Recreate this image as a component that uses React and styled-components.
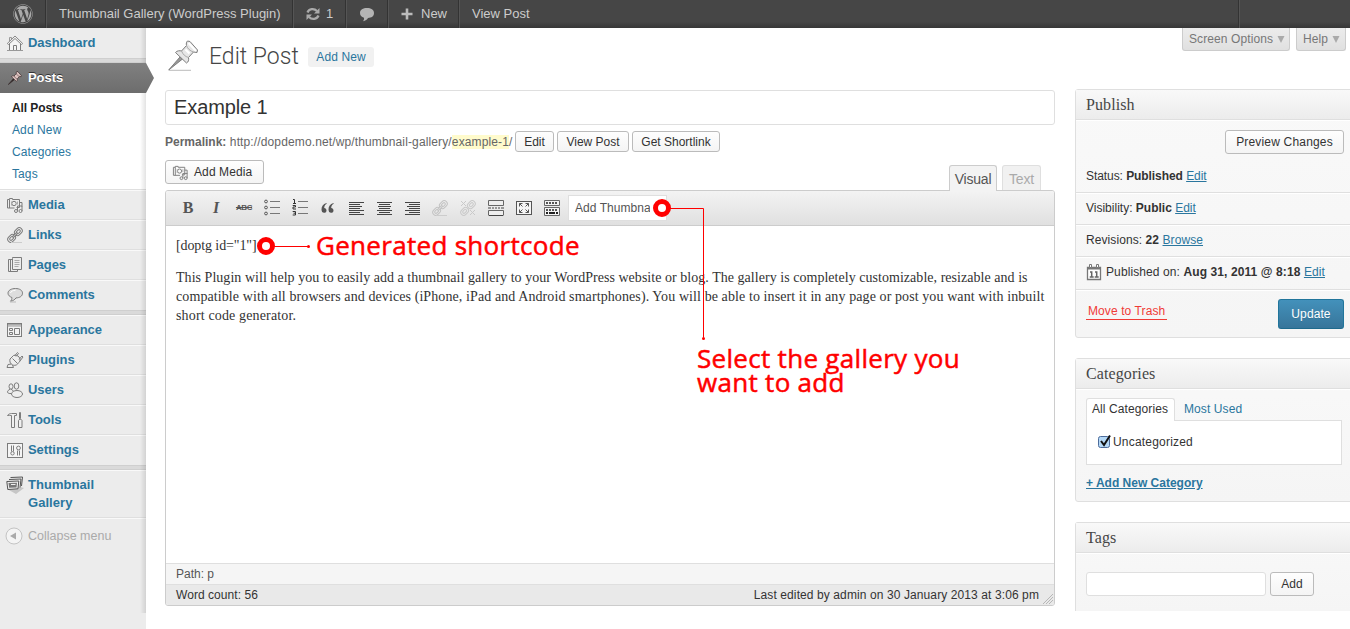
import React from "react";
import styled, { createGlobalStyle, css } from "styled-components";
import { FaWordpress } from "react-icons/fa";

const Global = createGlobalStyle`
  * { box-sizing: border-box; }
  body { margin: 0; background: #fff; overflow: hidden; }
`;

const sans = `"Liberation Sans", Arial, sans-serif`;
const serif = `"Liberation Serif", Georgia, serif`;
const link = "#2a769e";

const Page = styled.div`
  position: relative;
  width: 1350px;
  height: 629px;
  overflow: hidden;
  font: 12px/18px ${sans};
  letter-spacing: 0.1px;
  color: #333;
  display: flex;
  flex-direction: column;
`;

const T = styled.span`
  white-space: pre;
  ${(p) => p.$ls !== undefined && css`letter-spacing: ${p.$ls}px;`}
`;

/* ---------- admin bar ---------- */
const AdminBar = styled.header`
  flex: none;
  height: 28px;
  display: flex;
  background: linear-gradient(#464646 0 22px, #373737);
  color: #ccc;
  font-size: 13px;
  letter-spacing: 0;
  line-height: 28px;
`;
const BarItem = styled.div`
  width: ${(p) => p.$w}px;
  padding-left: ${(p) => p.$pl}px;
  display: flex;
  align-items: center;
  border-right: ${(p) => (p.$last ? "none" : "1px solid #333")};
  box-shadow: ${(p) => (p.$last ? "none" : "1px 0 0 #555")};
  gap: ${(p) => p.$gap || 0}px;
  color: #ccc;
  svg { flex: none; }
`;

/* ---------- sidebar ---------- */
const Body = styled.div`
  flex: 1;
  display: flex;
  min-height: 0;
`;
const Sidebar = styled.nav`
  position: relative;
  width: 146px;
  flex: none;
  background: #ececec;
  &::after {
    content: "";
    position: absolute;
    top: 0;
    right: 0;
    width: 6px;
    height: 585px;
    background: linear-gradient(90deg, rgba(0,0,0,0), rgba(0,0,0,0.11));
    pointer-events: none;
  }
`;
const MenuItem = styled.div`
  display: flex;
  align-items: flex-start;
  height: ${(p) => p.$h || 30}px;
  padding: 5px 0 0 6px;
  gap: 4px;
  border-top: ${(p) => (p.$first ? "1px solid #ececec" : "1px solid #f9f9f9")};
  border-bottom: ${(p) => (p.$end ? "1px solid #ececec" : "1px solid #dfdfdf")};
  color: ${link};
  font-weight: bold;
  font-size: 13px;
  letter-spacing: -0.05px;
  svg { flex: none; width: 18px; height: 18px; }
`;
const CurrentItem = styled(MenuItem)`
  position: relative;
  z-index: 2;
  border: 0;
  padding-top: 6px;
  background: linear-gradient(#808080, #6d6d6d);
  color: #fff;
  text-shadow: 0 -1px 0 #333;
  svg { width: 14px; height: 14px; margin: 2px 2px 0; }
  &::after {
    content: "";
    position: absolute;
    left: 146px;
    top: 0;
    width: 8px;
    height: 30px;
    background: linear-gradient(#808080, #6d6d6d);
    clip-path: polygon(0 0, 100% 50%, 0 100%);
  }
`;
const Separator = styled.div`
  height: 5px;
  background: #dadada;
  border-top: 1px solid #cfcfcf;
  border-bottom: 1px solid #cfcfcf;
`;
const SubMenu = styled.div`
  height: 97px;
  padding: 4px 0 0 12px;
  background: #fff;
  border-bottom: 1px solid #dfdfdf;
  line-height: 22px;
  color: ${link};
  display: flex;
  flex-direction: column;
`;
const SubCurrent = styled.div`
  font-weight: bold;
  letter-spacing: -0.1px;
  color: #222;
`;
const Collapse = styled.div`
  display: flex;
  align-items: center;
  gap: 5px;
  height: 35px;
  padding-left: 5px;
  border-top: 1px solid #f9f9f9;
  color: #aaa;
  font-size: 12.5px;
  letter-spacing: 0;
`;

/* ---------- content ---------- */
const Content = styled.main`
  flex: 1;
  display: grid;
  grid-template-columns: 890px 275px;
  column-gap: 20px;
  padding-left: 19px;
`;
const MainCol = styled.section`
  display: flex;
  flex-direction: column;
`;
const Heading = styled.div`
  display: flex;
  align-items: center;
  height: 62px;
  padding: 0 0 5px 3px;
  svg { flex: none; margin-bottom: 2px; }
`;
const H2 = styled.h2`
  margin: 0 0 0 10px;
  width: 99px;
  font: 300 23px/30px Roboto, ${sans};
  letter-spacing: 0;
  color: #464646;
  white-space: nowrap;
`;
const AddNew = styled.a`
  height: 20px;
  width: 66px;
  text-align: center;
  line-height: 20px;
  border-radius: 3px;
  background: #f1f1f1;
  color: ${link};
  margin-top: 1px;
`;
const TitleBox = styled.div`
  height: 35px;
  border: 1px solid #dfdfdf;
  border-radius: 3px;
  padding-left: 8px;
  font-size: 20px;
  letter-spacing: -0.1px;
  line-height: 33px;
`;
const Button = styled.button`
  height: ${(p) => p.$h || 24}px;
  width: ${(p) => p.$w}px;
  flex: none;
  padding: 0;
  display: flex;
  align-items: center;
  justify-content: center;
  gap: 5px;
  border: 1px solid #bbb;
  border-radius: 3px;
  background: linear-gradient(#fefefe, #f4f4f4);
  font: 12px/18px ${sans};
  letter-spacing: ${(p) => p.$ls || 0}px;
  color: #333;
  ${(p) =>
    p.$primary &&
    css`
      border-color: #21759b #21759b #1e6a8d;
      background: linear-gradient(#4391bb, #37759a);
      color: #fff;
      text-shadow: 0 1px 0 rgba(0, 0, 0, 0.1);
    `}
`;
const MediaButton = styled(Button)`
  justify-content: flex-start;
  padding-left: 6px;
  gap: 5px;
`;
const Permalink = styled.div`
  display: flex;
  align-items: center;
  height: 22px;
  margin-top: 5px;
  gap: 3px;
  color: #666;
`;
const SmallButton = styled(Button)`
  height: 21px;
  padding-top: 1px;
`;
const PermaText = styled.div`
  width: 347px;
  padding-top: 1px;
  letter-spacing: 0.13px;
  white-space: nowrap;
  b { letter-spacing: 0; }
  mark { background: #fffbcc; color: #666; }
`;
const EditorTools = styled.div`
  display: flex;
  justify-content: space-between;
  align-items: flex-start;
  height: 38px;
  padding-top: 8px;
`;
const Tabs = styled.div`
  display: flex;
  gap: 5px;
  margin: 5px 14px 0 0;
`;
const Tab = styled.div`
  height: ${(p) => (p.$active ? 26 : 25)}px;
  width: ${(p) => p.$w}px;
  border: 1px solid ${(p) => (p.$active ? "#ccc" : "#dfdfdf")};
  border-bottom: 0;
  border-radius: 3px 3px 0 0;
  background: ${(p) => (p.$active ? "#f3f3f3" : "#f1f1f1")};
  color: ${(p) => (p.$active ? "#555" : "#aaa")};
  font-size: 14px;
  letter-spacing: -0.2px;
  line-height: 26px;
  text-align: center;
  position: relative;
  z-index: 1;
`;
const Editor = styled.div`
  height: 416px;
  border: 1px solid #ccc;
  border-radius: 3px;
  display: flex;
  flex-direction: column;
  overflow: hidden;
`;
const Toolbar = styled.div`
  display: flex;
  align-items: center;
  height: 35px;
  padding-left: 12px;
  gap: 8px;
  border-bottom: 1px solid #ccc;
  background: linear-gradient(#f3f3f3, #e0e0e0);
  svg { flex: none; }
`;
const Glyph = styled.span`
  width: 20px;
  text-align: center;
  color: #555;
  font: ${(p) => p.$font};
  letter-spacing: ${(p) => p.$ls || 0}px;
`;
const Select = styled.div`
  width: 99px;
  height: 26px;
  margin-left: -2px;
  border: 1px solid #dfdfdf;
  background: #fff;
  color: #555;
  padding: 0 17px 0 6px;
  font-size: 12px;
  line-height: 24px;
  div { overflow: hidden; white-space: nowrap; width: 75px; }
`;
const Text = styled.div`
  flex: 1;
  padding: 10px;
  font: 14px/19px ${serif};
  color: #333;
  p { margin: 0 0 13px; white-space: nowrap; }
`;
const StatusRow = styled.div`
  display: flex;
  justify-content: space-between;
  height: 21px;
  padding: 0 15px 0 10px;
  line-height: 20px;
  border-top: 1px solid #dfdfdf;
  background: ${(p) => (p.$dark ? "#e9e9e9" : "#f5f5f5")};
  color: ${(p) => (p.$dark ? "#333" : "#555")};
  position: relative;
  svg { position: absolute; right: 0; bottom: 0; }
`;

/* ---------- right column ---------- */
const SideCol = styled.aside`
  display: flex;
  flex-direction: column;
`;
const ScreenLinks = styled.div`
  display: flex;
  justify-content: flex-end;
  gap: 6px;
  height: 61px;
  padding-right: 4px;
`;
const ScreenLink = styled.div`
  height: 23px;
  width: ${(p) => p.$w}px;
  flex: none;
  display: flex;
  align-items: center;
  gap: 4px;
  padding: 0 0 1px 6px;
  border: 1px solid #ccc;
  border-top: 0;
  border-radius: 0 0 3px 3px;
  background: linear-gradient(#ececec, #e0e0e0);
  color: #777;
  svg { margin-top: 1px; }
`;
const Panel = styled.section`
  width: 290px;
  height: ${(p) => p.$h}px;
  flex: none;
  margin-bottom: 20px;
  border: 1px solid #dfdfdf;
  border-bottom-width: ${(p) => (p.$cut ? 0 : 1)}px;
  border-radius: ${(p) => (p.$cut ? "3px 3px 0 0" : "3px")};
  background: linear-gradient(#f9f9f9, #f5f5f5);
`;
const PanelTitle = styled.h3`
  margin: 0;
  height: 30px;
  padding-left: 10px;
  border-bottom: 1px solid #dfdfdf;
  background: linear-gradient(#f9f9f9, #ececec);
  box-shadow: 0 1px 0 #fff;
  font: 16px/29px ${serif};
  color: #464646;
`;
const Row = styled.div`
  display: flex;
  align-items: center;
  height: ${(p) => p.$h || 32}px;
  padding: 0 0 2px 10px;
  border-bottom: 1px solid #dfdfdf;
  box-shadow: 0 1px 0 #fff;
  letter-spacing: 0;
  a { color: ${link}; text-decoration: underline; }
  svg { margin: 0 4px 0 0; }
`;
const PreviewRow = styled.div`
  height: 41px;
  padding: 10px 0 0 149px;
`;
const Actions = styled.div`
  display: flex;
  justify-content: space-between;
  height: 47px;
  padding: 9px 20px 0 10px;
`;
const Trash = styled.a`
  height: 21px;
  width: 81px;
  padding: 3px 0 0 2px;
  white-space: nowrap;
  color: #f03a36;
  border-bottom: 1px solid #f03a36;
`;
const CatTabs = styled.div`
  display: flex;
  padding: 9px 0 0 10px;
  color: ${link};
  line-height: 22px;
`;
const CatTab = styled.div`
  width: 89px;
  height: 23px;
  margin: 0 9px -1px 0;
  border: 1px solid #dfdfdf;
  border-bottom: 0;
  border-radius: 3px 3px 0 0;
  background: #fff;
  color: #333;
  padding-left: 5px;
  line-height: 21px;
  white-space: nowrap;
  position: relative;
`;
const CatBox = styled.div`
  width: 256px;
  height: 45px;
  margin-left: 10px;
  border: 1px solid #dfdfdf;
  background: #fff;
  display: flex;
  align-items: center;
  padding: 0 0 1px 10px;
  gap: 1px;
  svg { margin-bottom: 2px; }
`;
const AddCategory = styled.a`
  display: block;
  margin: 9px 0 0 10px;
  font-weight: bold;
  letter-spacing: 0;
  color: ${link};
  text-decoration: underline;
`;
const TagRow = styled.div`
  display: flex;
  gap: 4px;
  padding: 19px 0 0 10px;
`;
const TagInput = styled.div`
  width: 180px;
  height: 24px;
  border: 1px solid #dfdfdf;
  border-radius: 3px;
  background: #fff;
`;

/* ---------- annotations ---------- */
const Callout = styled.div`
  position: absolute;
  left: ${(p) => p.$x}px;
  top: ${(p) => p.$y}px;
  z-index: 5;
  font: 400 26px/24px "Open Sans", sans-serif;
  letter-spacing: 0.3px;
  -webkit-text-stroke: 0.5px #f00;
  color: #f00;
  white-space: pre;
`;
const Pointer = styled.svg`
  position: absolute;
  left: ${(p) => p.$x}px;
  top: ${(p) => p.$y}px;
  z-index: 5;
`;

/* ---------- icons ---------- */
const Svg = ({ s = 18, children, ...r }) => (
  <svg width={s} height={s} viewBox="0 0 18 18" fill="none" stroke="#7c7c7c" strokeWidth="1" {...r}>
    {children}
  </svg>
);
const HomeIcon = () => (
  <Svg>
    <path d="M3.500 10v6.500h11V10L9 5z" fill="#f4f4f4" stroke="none" />
    <path d="M3.500 10v6.500h11V10M7.500 16.500v-5h3v5" />
    <path d="M3.500 7V3.500h2V5M1 16.500h16" stroke="#999" />
    <path d="M1.300 9.500 9 2l7.700 7.500-1.200 1L9 4.500l-6.500 6z" fill="#eee" stroke="#888" />
  </Svg>
);
const PinIcon = ({ s = 14, light }) => (
  <svg width={s} height={s} viewBox="0 0 31 31" strokeWidth={light ? 1 : 1.6} stroke={light ? "#7d7d7d" : "#3a2d2d"} strokeLinejoin="round">
    {light && <path d="M1 30.300h22" stroke="#bbb" />}
    <path d="M12 17 .7 30 14.500 19z" fill={light ? "#999" : "#222"} />
    <path d="M19.500 1 22 1.500 29.500 10 29 12.500 25.500 12 20.500 17.500C21 20 20.500 22 18.500 23L7.500 12.500C9 10.500 12 10.500 13.500 11L18.500 5.500C18 3.500 18.500 2 19.500 1z" fill={light ? "#e6e6e6" : "#dcc3c0"} />
    <path d="M13.500 11c1.500 3.500 3.500 5.500 7 6.500M18.500 5.500c1 3 3.500 5.500 7 6.500" fill="none" stroke={light ? "#aaa" : "#6a5050"} />
    {light && <path d="m20.500 3 7.500 8M17.500 9.500l4 4" stroke="#fff" strokeWidth="2" fill="none" />}
  </svg>
);
const MediaIcon = ({ s }) => (
  <Svg s={s}>
    <path d="M1.500 3.500h2v-1h3v1h7v8h-3M1.500 3.500v8.500h7M3.500 3.500v8.500" />
    <circle cx="8" cy="7.500" r="2.200" />
    <path d="M5.500 5.500v4M11.500 5.500v3" stroke="#aaa" />
    <path d="M11.500 15v-5h4.500v5M13.500 6.500h2.500v4" />
    <circle cx="10" cy="15" r="1.500" fill="#eee" />
    <circle cx="14.500" cy="15" r="1.500" fill="#eee" />
  </Svg>
);
const LinkIcon = ({ s = 18, broken, ...r }) => (
  <Svg s={s} strokeWidth="1" {...r}>
    <g transform="rotate(-45 9 9)">
      <rect x="0" y="6" width="8.500" height="6" rx="3" />
      <rect x="2" y="7.700" width="4.500" height="2.600" rx="1.300" />
      <rect x="9.500" y="6" width="8.500" height="6" rx="3" />
      <rect x="11.500" y="7.700" width="4.500" height="2.600" rx="1.300" />
      {!broken && <path d="M6 8.300h6v1.400H6z" fill="#eee" />}
    </g>
    {broken ? (
      <path d="m2 2 5 5M7 2 2 7M11 11l5 5M16 11l-5 5" />
    ) : (
      <path d="M5 16.500h11" stroke="#ccc" />
    )}
  </Svg>
);
const PagesIcon = () => (
  <Svg>
    <path d="M6.500 2.500v-1h9v12h-9zM6.500 3.500h-4v12h9v-2M4.500 3.500v12" />
    <path d="M8.500 4.500h5M8.500 6.500h5M8.500 8.500h5M8.500 10.500h4" stroke="#aaa" />
  </Svg>
);
const CommentIcon = () => (
  <Svg>
    <path d="M9.500 2.500c4 0 7 1.800 7 4.700 0 3-2.800 4.600-6.500 4.700-1.300 1.900-3 3-5.500 3.300 1-.9 1.500-2 1.400-3.700C3.800 10.700 2 9.300 2 7.200c0-2.900 3.300-4.700 7.500-4.700z" fill="#ddd" />
    <path d="M4.500 7c.3-1.600 2.500-2.700 5-2.700" stroke="#fff" />
    <path d="M4 16h6" stroke="#bbb" />
  </Svg>
);
const AppearanceIcon = () => (
  <Svg>
    <rect x="1.500" y="2.500" width="14" height="13" fill="#f3f3f3" />
    <path d="M1.500 5h14M2 3.700h13" stroke="#999" />
    <path d="M3.500 7.500h3v2h-3zM3.500 11.500h3v2h-3zM8.500 7.500h5v6h-5z" />
  </Svg>
);
const PluginIcon = () => (
  <Svg>
    <path d="M4.500 8.500 8 5c1.800-1 4.500.2 5.500 1.500s1.500 3 .5 5l-3.200 3c-2 .6-3.500.3-4.800-.8S4 11 4.500 8.500z" transform="translate(-.5 -.5)" fill="#eee" />
    <path d="m8.500 5 3-3.500 1 1-2.500 3M13 8.500 16 5l1 1-3 4M5.500 13 2 13.500l-1 3h6.500l-1-2.500" />
    <path d="m6.500 7.500 5 5" />
  </Svg>
);
const UsersIcon = () => (
  <Svg>
    <ellipse cx="5" cy="5.500" rx="2" ry="2.700" />
    <ellipse cx="10.500" cy="5" rx="2.300" ry="3.200" />
    <path d="M4.200 8.200C2.500 9 1.500 9.800 1.500 11c0 1.300 2 1.700 3.700 1.500" />
    <ellipse cx="11" cy="13" rx="5.500" ry="3.500" fill="#eee" />
    <path d="M5 8.200c1 .3 1.700.8 2.200 1.800" />
  </Svg>
);
const ToolsIcon = () => (
  <Svg>
    <path d="M1.500 4.500c1-1.500 2.500-2 4-2h5v2h-2v12h-3v-12c-1.500-.3-3-.2-4 0zM13.500 1.500h1v6h-1zM12.500 9.500c0-1.500 3.500-1.500 3.500 0v7h-3.500z" fill="#f0f0f0" />
  </Svg>
);
const SettingsIcon = () => (
  <Svg>
    <rect x="1.500" y="2.500" width="15" height="14" fill="#f5f5f5" />
    <path d="M5.500 4.500v6M7.500 4.500v6M11.500 9.500v5M13.500 9.500v5" />
    <circle cx="6.500" cy="12.300" r="1.700" />
    <circle cx="12.500" cy="7" r="1.900" />
  </Svg>
);
const GalleryIcon = () => (
  <Svg>
    <path d="m1 13 7-1 6-1 4 1-8 6z" fill="#c6c6c6" stroke="none" />
    <path d="m4.500 1.500 12-.5-1 9" stroke="#555" />
    <path d="m3 3.500 12-.5-1 8.500" stroke="#555" />
    <path d="m.8 5.500 12-.5-.8 7.800-10.200.7z" fill="#eee" stroke="#555" />
    <path d="m2.500 7 8.500-.3-.5 4.800-7.300.3z" fill="#777" stroke="none" />
    <path d="M5 8.500h4.500" stroke="#eee" />
  </Svg>
);
const CollapseIcon = () => (
  <Svg stroke="#c4c4c4">
    <circle cx="9" cy="9" r="8" fill="#f4f4f4" />
    <path d="m5 9 6-3.500v7z" fill="#aaa" stroke="none" />
  </Svg>
);
const RefreshIcon = () => (
  <svg width="16" height="14" viewBox="0 0 16 14" fill="none" stroke="#aaa" strokeWidth="2.300">
    <path d="M2.500 5.500C4 1.700 9 1 12 4M13.500 8.500C12 12.300 7 13 4 10" />
    <path d="M14.500 1v5.500H9zM1.500 13V7.500H7z" fill="#aaa" stroke="none" />
  </svg>
);
const BubbleIcon = () => (
  <svg width="16" height="15" viewBox="0 0 16 15" fill="#b4b4b4">
    <path d="M8 1c4 0 7 1.700 7 5s-2.500 4.800-6 5c-1 1.700-2.500 2.800-5 3.200.8-1 1.200-2 1-3.500C2.500 10 1 8.500 1 6c0-3.300 3-5 7-5z" />
  </svg>
);
const PlusIcon = () => (
  <svg width="12" height="12" viewBox="0 0 12 12" stroke="#bbb" strokeWidth="2.600">
    <path d="M6 .5v11M.5 6h11" />
  </svg>
);
const Bar20 = ({ children, ...r }) => (
  <svg width="20" height="20" viewBox="0 0 20 20" fill="none" stroke="#555" strokeWidth="1" {...r}>
    {children}
  </svg>
);
const ListIcon = ({ numbered }) => (
  <Bar20>
    <path d="M8 3.500h10M8 9.500h10M8 15.500h10" stroke="#777" />
    {numbered ? (
      <path d="M3 1.500h1.500V5M3 5.500h3M2.700 7.500h2.800v1.500H3v2h3M2.700 13.500h2.800V17H2.700M3.500 15.200h2" stroke="#333" />
    ) : (
      [3.5, 9.5, 15.5].map((y) => <circle key={y} cx="4" cy={y} r="1.400" />)
    )}
  </Bar20>
);
const AlignIcon = ({ kind }) => (
  <Bar20 stroke="#444">
    {[15, 11, 13, 11, 15, 11, 15].map((w, i) => {
      const x = kind === "left" ? 3 : kind === "right" ? 18 - w : 10.5 - w / 2;
      return <path key={i} d={`M${x} ${4.5 + i * 2}h${w}`} />;
    })}
  </Bar20>
);
const MoreIcon = () => (
  <Bar20 stroke="#666">
    <path d="M2.500 2.500h15v5h-15zM2.500 17.500v-5h15v5" fill="#eee" />
    <path d="M2 10h3M6 10h2M9 10h2M12 10h2M15 10h3M3 17.500h14" stroke="#444" />
  </Bar20>
);
const FullIcon = () => (
  <Bar20 stroke="#555">
    <rect x="2.500" y="3.500" width="15" height="13" fill="#f5f5f5" />
    <path d="M5.500 8.500v-3h3M11.500 5.500h3v3M14.500 11.500v3h-3M8.500 14.500h-3v-3" />
    <path d="m5.500 5.500 3 3M14.500 5.500l-3 3M14.500 14.500l-3-3M5.500 14.500l3-3" />
  </Bar20>
);
const SinkIcon = () => (
  <Bar20 stroke="#666">
    <path d="M2.500 2.500h15v5h-15zM2.500 9.500h15v8h-15z" fill="#f3f3f3" />
    <path d="M4 5h12M4 12h12" strokeWidth="2" strokeDasharray="2 1" stroke="#555" />
    <path d="M4 15h2M7 15h6M14 15h2" strokeWidth="2" stroke="#222" />
  </Bar20>
);
const CalendarIcon = () => (
  <svg width="16" height="18" viewBox="0 0 16 18" fill="none" stroke="#777">
    <path d="M1.500 4.500h13v12h-13z" fill="#fff" strokeWidth="1.300" />
    <path d="M1.500 5.500h13" strokeWidth="2" />
    <path d="M3.500 1.500h2v3h-2zM10.500 1.500h2v3h-2z" fill="#fff" />
    <path d="M4 9h1.700v4.500M3.700 14h4M9 9h1.700v4.500M8.700 14h4" stroke="#666" strokeWidth="1.500" />
  </svg>
);
const CheckIcon = () => (
  <svg width="15" height="15" viewBox="0 0 15 15">
    <rect x="1.500" y="2.500" width="11" height="11" rx="2" fill="#b5d9f7" stroke="#4c6b9b" />
    <path d="m4 7 3 4L13 1.500" fill="none" stroke="#111" strokeWidth="2" />
  </svg>
);
const DownArrow = () => (
  <svg width="8" height="7" viewBox="0 0 8 7">
    <path d="M.5 0h7L4 7z" fill="#aaa" />
  </svg>
);

const groupOne = [
  ["Media", MediaIcon],
  ["Links", LinkIcon],
  ["Pages", PagesIcon],
  ["Comments", CommentIcon],
];
const groupTwo = [
  ["Appearance", AppearanceIcon],
  ["Plugins", PluginIcon],
  ["Users", UsersIcon],
  ["Tools", ToolsIcon],
  ["Settings", SettingsIcon],
];
const Group = ({ items }) =>
  items.map(([name, Icon], i) => (
    <MenuItem key={name} $end={i === items.length - 1}>
      <Icon />
      <T>{name}</T>
    </MenuItem>
  ));

export default function App() {
  return (
    <Page>
      <Global />
      <AdminBar>
        <BarItem $w={46} $pl={13}><FaWordpress size={20} color="#aaa" /></BarItem>
        <BarItem $w={247} $pl={13}><T>Thumbnail Gallery (WordPress Plugin)</T></BarItem>
        <BarItem $w={53} $pl={12} $gap={5}><RefreshIcon /><T>1</T></BarItem>
        <BarItem $w={42} $pl={13}><BubbleIcon /></BarItem>
        <BarItem $w={71} $pl={13} $gap={8}><PlusIcon /><T>New</T></BarItem>
        <BarItem $w={780} $pl={13}><T>View Post</T></BarItem>
        <BarItem $w={111} $pl={0} $last />
      </AdminBar>
      <Body>
        <Sidebar>
          <MenuItem $first $end><HomeIcon /><T>Dashboard</T></MenuItem>
          <Separator />
          <CurrentItem><PinIcon /><T>Posts</T></CurrentItem>
          <SubMenu>
            <SubCurrent>All Posts</SubCurrent>
            <T>Add New</T>
            <T>Categories</T>
            <T>Tags</T>
          </SubMenu>
          <Group items={groupOne} />
          <Separator />
          <Group items={groupTwo} />
          <Separator />
          <MenuItem $h={48}><GalleryIcon /><T $ls={0.05}>{"Thumbnail\nGallery"}</T></MenuItem>
          <Collapse><CollapseIcon /><T>Collapse menu</T></Collapse>
        </Sidebar>
        <Content>
          <MainCol>
            <Heading>
              <PinIcon s={31} light />
              <H2>Edit Post</H2>
              <AddNew>Add New</AddNew>
            </Heading>
            <TitleBox><T>Example 1</T></TitleBox>
            <Permalink>
              <PermaText>
                <b>Permalink:</b> http://dopdemo.net/wp/thumbnail-gallery/<mark>example-1</mark>/
              </PermaText>
              <SmallButton $w={39}>Edit</SmallButton>
              <SmallButton $w={72}>View Post</SmallButton>
              <SmallButton $w={88}>Get Shortlink</SmallButton>
            </Permalink>
            <EditorTools>
              <MediaButton $w={99} $ls={0.1}><MediaIcon s={17} />Add Media</MediaButton>
              <Tabs>
                <Tab $w={48} $active>Visual</Tab>
                <Tab $w={39}>Text</Tab>
              </Tabs>
            </EditorTools>
            <Editor>
              <Toolbar>
                <Glyph $font={`bold 16px/20px ${serif}`}>B</Glyph>
                <Glyph $font={`italic bold 16px/20px ${serif}`}>I</Glyph>
                <Glyph $font={`bold 8px/20px ${sans}`} $ls={-0.4}><s>ABC</s></Glyph>
                <ListIcon />
                <ListIcon numbered />
                <Bar20 fill="#555" stroke="none">
                  <path d="M8.500 5C5 6 3.500 8.500 3.500 11.500c0 2 1 3.300 2.600 3.300 1.400 0 2.400-1 2.400-2.400S7.500 10 6.200 10c0-2 .8-3.300 2.500-4.300zM15.500 5c-3.500 1-5 3.500-5 6.500 0 2 1 3.300 2.600 3.300 1.400 0 2.400-1 2.400-2.400S14.500 10 13.200 10c0-2 .8-3.300 2.500-4.300z" />
                </Bar20>
                <AlignIcon kind="left" />
                <AlignIcon kind="center" />
                <AlignIcon kind="right" />
                <LinkIcon s={18} stroke="#c3c3c3" style={{ margin: "0 1px" }} />
                <LinkIcon s={18} stroke="#c9c9c9" broken style={{ margin: "0 1px" }} />
                <MoreIcon />
                <FullIcon />
                <SinkIcon />
                <Select><div><T $ls={0.05}>Add Thumbna</T></div></Select>
              </Toolbar>
              <Text>
                <p><T $ls={-0.1}>[doptg id="1"]</T></p>
                <p>
                  <T $ls={0.037}>This Plugin will help you to easily add a thumbnail gallery to your WordPress website or blog. The gallery is completely customizable, resizable and is</T><br />
                  <T $ls={0.093}>compatible with all browsers and devices (iPhone, iPad and Android smartphones). You will be able to insert it in any page or post you want with inbuilt</T><br />
                  <T $ls={0.15}>short code generator.</T>
                </p>
              </Text>
              <StatusRow><T $ls={0}>Path: p</T></StatusRow>
              <StatusRow $dark>
                <T $ls={0.05}>Word count: 56</T>
                <T>Last edited by admin on 30 January 2013 at 3:06 pm</T>
                <svg width="12" height="12" viewBox="0 0 12 12" stroke="#aaa" strokeWidth="0.800">
                  <path d="M1 11 11 1M4 11l7-7M7 11l4-4" />
                </svg>
              </StatusRow>
            </Editor>
          </MainCol>
          <SideCol>
            <ScreenLinks>
              <ScreenLink $w={108}><T>Screen Options</T><DownArrow /></ScreenLink>
              <ScreenLink $w={50}><T>Help</T><DownArrow /></ScreenLink>
            </ScreenLinks>
            <Panel $h={249}>
              <PanelTitle><T>Publish</T></PanelTitle>
              <PreviewRow><Button $w={119} $ls={0.18}>Preview Changes</Button></PreviewRow>
              <Row><T $ls={-0.07}>Status: <b>Published</b> <a>Edit</a></T></Row>
              <Row><T>Visibility: <b>Public</b> <a>Edit</a></T></Row>
              <Row><T $ls={0.08}>Revisions: <b>22</b> <a>Browse</a></T></Row>
              <Row $h={33}><CalendarIcon /><T $ls={0.1}>Published on: <b>Aug 31, 2011 @ 8:18</b> <a>Edit</a></T></Row>
              <Actions>
                <Trash>Move to Trash</Trash>
                <Button $w={66} $h={30} $ls={0.1} $primary>Update</Button>
              </Actions>
            </Panel>
            <Panel $h={144}>
              <PanelTitle><T>Categories</T></PanelTitle>
              <CatTabs><CatTab>All Categories</CatTab><T>Most Used</T></CatTabs>
              <CatBox><CheckIcon /><T $ls={0.2}>Uncategorized</T></CatBox>
              <AddCategory>+ Add New Category</AddCategory>
            </Panel>
            <Panel $h={89} $cut>
              <PanelTitle><T>Tags</T></PanelTitle>
              <TagRow><TagInput /><Button $w={44}>Add</Button></TagRow>
            </Panel>
          </SideCol>
        </Content>
      </Body>
      <Pointer $x={256} $y={236} width="56" height="20">
        <circle cx="10" cy="10" r="6.500" fill="#fff" stroke="#f00" strokeWidth="5" />
        <path d="M18 10.500h35" stroke="#f00" />
        <circle cx="52.500" cy="10.500" r="1.500" fill="#f00" />
      </Pointer>
      <Callout $x={316} $y={233}>Generated shortcode</Callout>
      <Pointer $x={652} $y={198} width="56" height="144">
        <circle cx="10" cy="10" r="6.500" fill="#fff" stroke="#f00" strokeWidth="5" />
        <path d="M18 10.500h33.500v129" stroke="#f00" fill="none" />
        <circle cx="51.500" cy="140.500" r="1.500" fill="#f00" />
      </Pointer>
      <Callout $x={697} $y={346}>{"Select the gallery you\nwant to add"}</Callout>
    </Page>
  );
}
